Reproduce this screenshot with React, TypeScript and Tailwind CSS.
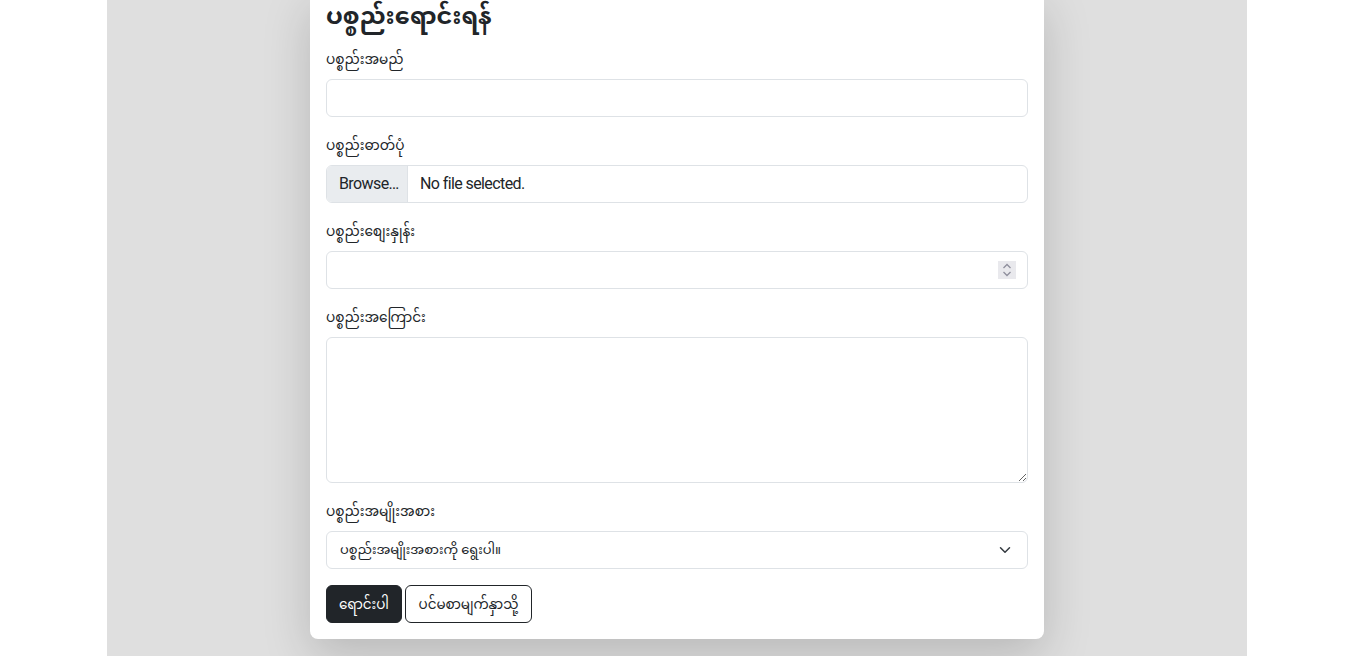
import React from "react";

const font = { fontFamily: '"Roboto", "Noto Sans Myanmar", "Noto Sans", sans-serif' };

function Label({ children }: { children: React.ReactNode }) {
  return <div className="text-[13.7px] leading-[24px] text-[#212529] mb-2">{children}</div>;
}

export default function App() {
  return (
    <div className="w-[1354px] h-[656px] bg-white overflow-hidden" style={font}>
      <div className="w-[1140px] h-[656px] mx-auto bg-[#dfdfdf] overflow-hidden">
        <div className="w-[734px] mx-auto -mt-[8px] bg-white rounded-b-lg shadow-[0_1rem_3rem_rgba(0,0,0,0.175)] px-4 pb-4 pt-[9px] text-[#212529]">
          <h4 className="text-[24px] font-bold leading-[31px] mb-[15px]">ပစ္စည်းရောင်းရန်</h4>

          <div className="mb-4">
            <Label>ပစ္စည်းအမည်</Label>
            <input className="block w-full h-[38px] border border-[#dee2e6] rounded-md px-3 outline-none" />
          </div>

          <div className="mb-4">
            <Label>ပစ္စည်းဓာတ်ပုံ</Label>
            <div className="flex w-full h-[38px] border border-[#dee2e6] rounded-md overflow-hidden text-[16px] tracking-[-0.6px]">
              <div className="w-[81px] bg-[#e9ecef] border-r border-[#dee2e6] flex items-center pl-3 text-[#212529]">Browse…</div>
              <div className="flex items-center pl-3 text-[#212529]">No file selected.</div>
            </div>
          </div>

          <div className="mb-4">
            <Label>ပစ္စည်းစျေးနှုန်း</Label>
            <div className="relative">
              <input className="block w-full h-[38px] border border-[#dee2e6] rounded-md px-3 outline-none" />
              <div className="absolute right-[12px] top-[10px] w-[18px] h-[18px] bg-[#e9e9ed] flex items-center justify-center">
                <svg width="10" height="14" viewBox="0 0 10 14" fill="none" stroke="#8f8f9d" strokeWidth="1.3">
                  <path d="M1.5 5 5 1.5 8.5 5" />
                  <path d="M1.5 9 5 12.5 8.5 9" />
                </svg>
              </div>
            </div>
          </div>

          <div className="mb-4">
            <Label>ပစ္စည်းအကြောင်း</Label>
            <textarea className="block w-full h-[146px] border border-[#dee2e6] rounded-md px-3 py-1.5 outline-none resize-y" />
          </div>

          <div className="mb-4">
            <Label>ပစ္စည်းအမျိုးအစား</Label>
            <div className="flex items-center justify-between w-full h-[38px] border border-[#dee2e6] rounded-md pl-[13px] pr-3 text-[13px]">
              <span>ပစ္စည်းအမျိုးအစားကို ရွေးပါ။</span>
              <svg width="16" height="12" viewBox="0 0 16 16" fill="none" stroke="#343a40" strokeWidth="2" strokeLinecap="round" strokeLinejoin="round" className="mr-[2px]">
                <path d="m2 5 6 6 6-6" />
              </svg>
            </div>
          </div>

          <div className="flex gap-[3px]">
            <button className="h-[38px] w-[76px] rounded-md bg-[#212529] text-white text-[13.5px] border border-[#212529]">ရောင်းပါ</button>
            <button className="h-[38px] w-[127px] rounded-md bg-white text-[#212529] text-[13.5px] border border-[#212529]">ပင်မစာမျက်နှာသို့</button>
          </div>
        </div>
      </div>
    </div>
  );
}
